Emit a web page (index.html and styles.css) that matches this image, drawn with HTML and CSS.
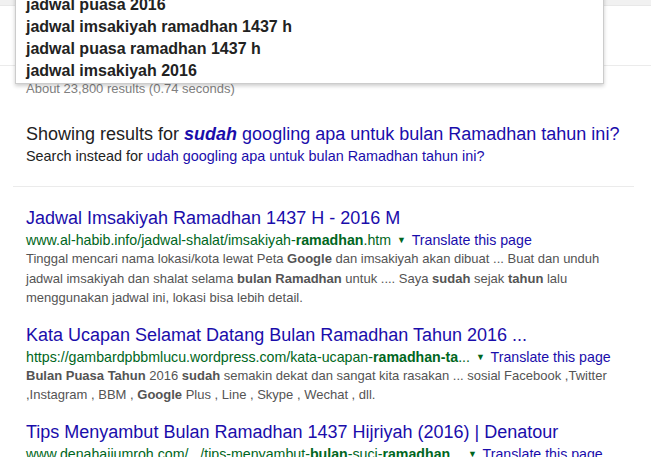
FILE: index.html
```html
<!DOCTYPE html>
<html lang="en">
<head>
    <meta charset="UTF-8">
    <title>sudah googling apa untuk bulan Ramadhan tahun ini?</title>
    <link rel="stylesheet" href="styles.css">
</head>
<body>

    <div class="top-bar"></div>
    <div class="tabs"></div>

    <!-- autocomplete suggestions -->
    <ul class="suggest">
        <li>jadwal puasa 2016</li>
        <li>jadwal imsakiyah ramadhan 1437 h</li>
        <li>jadwal puasa ramadhan 1437 h</li>
        <li>jadwal imsakiyah 2016</li>
    </ul>

    <div class="main">
        <div class="stats">About 23,800 results (0.74 seconds)</div>

        <div class="spelling">
            <p class="showing">Showing results for <a href="#"><b><i>sudah</i></b> googling apa untuk bulan Ramadhan tahun ini?</a></p>
            <p class="instead">Search instead for <a href="#">udah googling apa untuk bulan Ramadhan tahun ini?</a></p>
        </div>

        <hr class="divider">

        <div class="result">
            <h3><a href="#">Jadwal Imsakiyah Ramadhan 1437 H - 2016 M</a></h3>
            <div class="url">www.al-habib.info/jadwal-shalat/imsakiyah-<b>ramadhan</b>.htm <span class="arrow">&#9660;</span> <a href="#">Translate this page</a></div>
            <p class="snippet">Tinggal mencari nama lokasi/kota lewat Peta <b>Google</b> dan imsakiyah akan dibuat ... Buat dan unduh jadwal imsakiyah dan shalat selama <b>bulan Ramadhan</b> untuk .... Saya <b>sudah</b> sejak <b>tahun</b> lalu menggunakan jadwal ini, lokasi bisa lebih detail.</p>
        </div>

        <div class="result">
            <h3><a href="#">Kata Ucapan Selamat Datang Bulan Ramadhan Tahun 2016 ...</a></h3>
            <div class="url">https://gambardpbbmlucu.wordpress.com/kata-ucapan-<b>ramadhan-ta</b>... <span class="arrow">&#9660;</span> <a href="#">Translate this page</a></div>
            <p class="snippet"><b>Bulan Puasa Tahun</b> 2016 <b>sudah</b> semakin dekat dan sangat kita rasakan ... sosial Facebook ,Twitter ,Instagram , BBM , <b>Google</b> Plus , Line , Skype , Wechat , dll.</p>
        </div>

        <div class="result">
            <h3><a href="#">Tips Menyambut Bulan Ramadhan 1437 Hijriyah (2016) | Denatour</a></h3>
            <div class="url">www.denahajiumroh.com/.../tips-menyambut-<b>bulan</b>-suci-<b>ramadhan</b>... <span class="arrow">&#9660;</span> <a href="#">Translate this page</a></div>
        </div>
    </div>

</body>
</html>
```

FILE: styles.css
```css
body {
    margin: 0;
    font-family: "Liberation Sans", Arial, sans-serif;
    color: #222;
    background: #fff;
    overflow: hidden;
}
a {
    color: #1a0dab;
    text-decoration: none;
}
.top-bar {
    height: 5px;
    background-color: #f1f1f1;
    border-bottom: 1px solid #e8e8e8;
}
.tabs {
    height: 59px;
    border-bottom: 1px solid #ebebeb;
}
.suggest {
    position: absolute;
    top: -6px;
    left: 15px;
    width: 587px;
    margin: 0;
    padding: 0 0 1px;
    list-style: none;
    background: #fff;
    border: 1px solid #ccc;
    border-top: none;
    box-shadow: 0 2px 4px rgba(0, 0, 0, 0.2);
    z-index: 2;
}
.suggest li {
    padding-left: 10px;
    line-height: 22px;
    font-size: 16px;
    font-weight: bold;
    color: #222;
}
.main {
    padding-left: 26px;
    width: 582px;
}
.stats {
    margin-top: 15px;
    font-size: 13px;
    line-height: 16px;
    color: #808080;
}
.spelling p {
    margin: 0;
    white-space: nowrap;
}
.showing {
    margin-top: 26px !important;
    font-size: 18px;
    line-height: 22px;
}
.instead {
    font-size: 14.4px;
    line-height: 22px;
}
.divider {
    margin: 19px 0 0 -13px;
    width: 621px;
    border: none;
    border-top: 1px solid #ebebeb;
}
.result {
    margin-top: 20px;
}
.result + .result {
    margin-top: 16px;
}
.result h3 {
    margin: 0;
    font-size: 18px;
    font-weight: normal;
    line-height: 22px;
}
.url {
    padding-top: 3px;
    font-size: 14.2px;
    line-height: 17px;
    color: #006621;
    white-space: nowrap;
}
.arrow {
    font-size: 9px;
    vertical-align: 2px;
    margin: 0 2px;
}
.snippet {
    margin: 0;
    font-size: 13px;
    line-height: 19.5px;
    color: #545454;
}
```
